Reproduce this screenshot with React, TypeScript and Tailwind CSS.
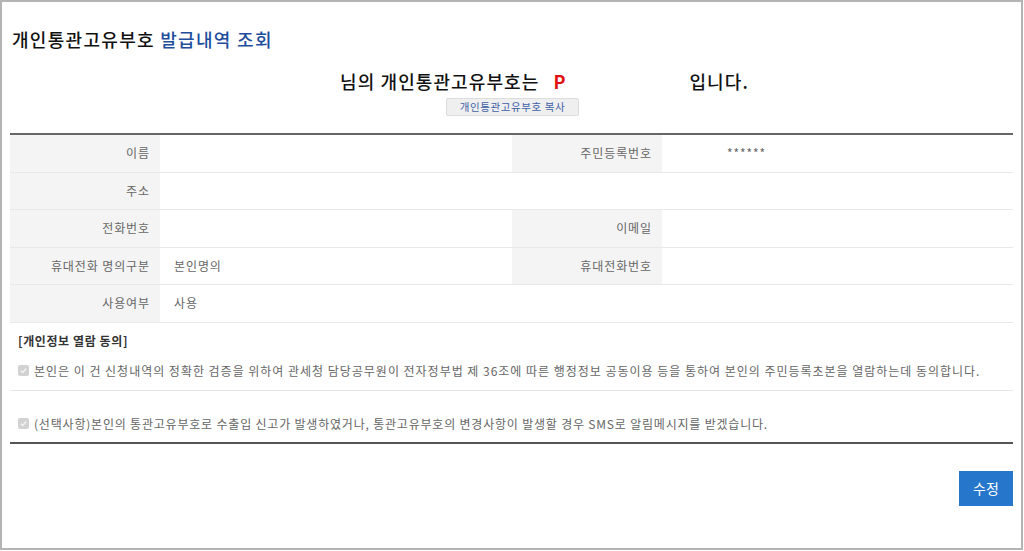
import React from 'react';

const font = { fontFamily: '"Noto Sans CJK KR", "Noto Sans", sans-serif' };

const Label: React.FC<{ children?: React.ReactNode }> = ({ children }) => (
  <div className="w-[150px] shrink-0 bg-[#f4f4f4] flex items-center justify-end pr-[10px] text-[12px] text-[#666] tracking-[0.9px]">
    {children}
  </div>
);

const Value: React.FC<{ children?: React.ReactNode; className?: string }> = ({ children, className = '' }) => (
  <div className={`flex items-center text-[12px] text-[#666] tracking-[0.9px] ${className}`}>{children}</div>
);

const Check: React.FC = () => (
  <span className="inline-flex items-center justify-center w-[11px] h-[11px] rounded-[2px] bg-[#d2d2d2] mr-[5px] shrink-0">
    <svg width="9" height="9" viewBox="0 0 10 10">
      <path d="M2 5.2 L4.2 7.3 L8 2.8" fill="none" stroke="#f2f2f2" strokeWidth="1.6" />
    </svg>
  </span>
);

export default function App() {
  return (
    <div style={font} className="w-[1023px] h-[550px] border-2 border-[#b4b4b4] bg-white px-[8px] overflow-hidden">
      <h1 className="mt-[24px] h-[26px] leading-[26px] text-[18px] font-medium text-[#111] pl-[2px] tracking-[1.3px]">
        개인통관고유부호 <span className="text-[#1f4e9c]">발급내역 조회</span>
      </h1>

      <div className="mt-[16px] h-[26px] leading-[26px] text-[18px] font-medium text-[#111] pl-[330px] flex tracking-[1.1px]">
        <span>님의 개인통관고유부호는</span>
        <span className="ml-[14px] text-[#e01010] font-bold w-[136px]">P</span>
        <span>입니다.</span>
      </div>

      <div className="mt-[4px] pl-[436px] flex">
        <button className="h-[18px] w-[133px] bg-[#efefef] border border-[#dcdcdc] rounded-[2px] text-[10.5px] leading-[16px] text-[#3d5fa6] tracking-[0.6px]">
          개인통관고유부호 복사
        </button>
      </div>

      <div className="mt-[17px] border-t-2 border-[#666]">
        <div className="flex h-[37.5px] border-b border-[#e8e8e8]">
          <Label>이름</Label>
          <Value className="w-[352px] pl-[14px]" />
          <Label>주민등록번호</Label>
          <Value className="flex-1 pl-[65px]">******</Value>
        </div>
        <div className="flex h-[37.5px] border-b border-[#e8e8e8]">
          <Label>주소</Label>
          <Value className="flex-1 pl-[14px]" />
        </div>
        <div className="flex h-[37.5px] border-b border-[#e8e8e8]">
          <Label>전화번호</Label>
          <Value className="w-[352px] pl-[14px]" />
          <Label>이메일</Label>
          <Value className="flex-1 pl-[14px]" />
        </div>
        <div className="flex h-[37.5px] border-b border-[#e8e8e8]">
          <Label>휴대전화 명의구분</Label>
          <Value className="w-[352px] pl-[14px]">본인명의</Value>
          <Label>휴대전화번호</Label>
          <Value className="flex-1 pl-[14px]" />
        </div>
        <div className="flex h-[37.5px] border-b border-[#e8e8e8]">
          <Label>사용여부</Label>
          <Value className="flex-1 pl-[14px]">사용</Value>
        </div>
      </div>

      <div className="mt-[9px] h-[18px] leading-[18px] pl-[8px] text-[12px] font-bold text-[#333] tracking-[0.6px]">
        [개인정보 열람 동의]
      </div>

      <div className="border-b border-[#e6e6e6] pb-[10px]">
        <label className="mt-[12px] h-[18px] flex items-center pl-[8px] text-[12px] text-[#666] tracking-[0.98px] whitespace-nowrap">
          <Check />
          본인은 이 건 신청내역의 정확한 검증을 위하여 관세청 담당공무원이 전자정부법 제 36조에 따른 행정정보 공동이용 등을 통하여 본인의 주민등록초본을 열람하는데 동의합니다.
        </label>
      </div>

      <div className="border-b-2 border-[#555] pb-[9px]">
        <label className="mt-[24px] h-[18px] flex items-center pl-[8px] text-[12px] text-[#666] tracking-[0.8px] whitespace-nowrap">
          <Check />
          (선택사항)본인의 통관고유부호로 수출입 신고가 발생하였거나, 통관고유부호의 변경사항이 발생할 경우 SMS로 알림메시지를 받겠습니다.
        </label>
      </div>

      <div className="mt-[27px] flex justify-end">
        <button className="w-[54px] h-[35px] bg-[#2676cb] text-white text-[14px]">수정</button>
      </div>
    </div>
  );
}
